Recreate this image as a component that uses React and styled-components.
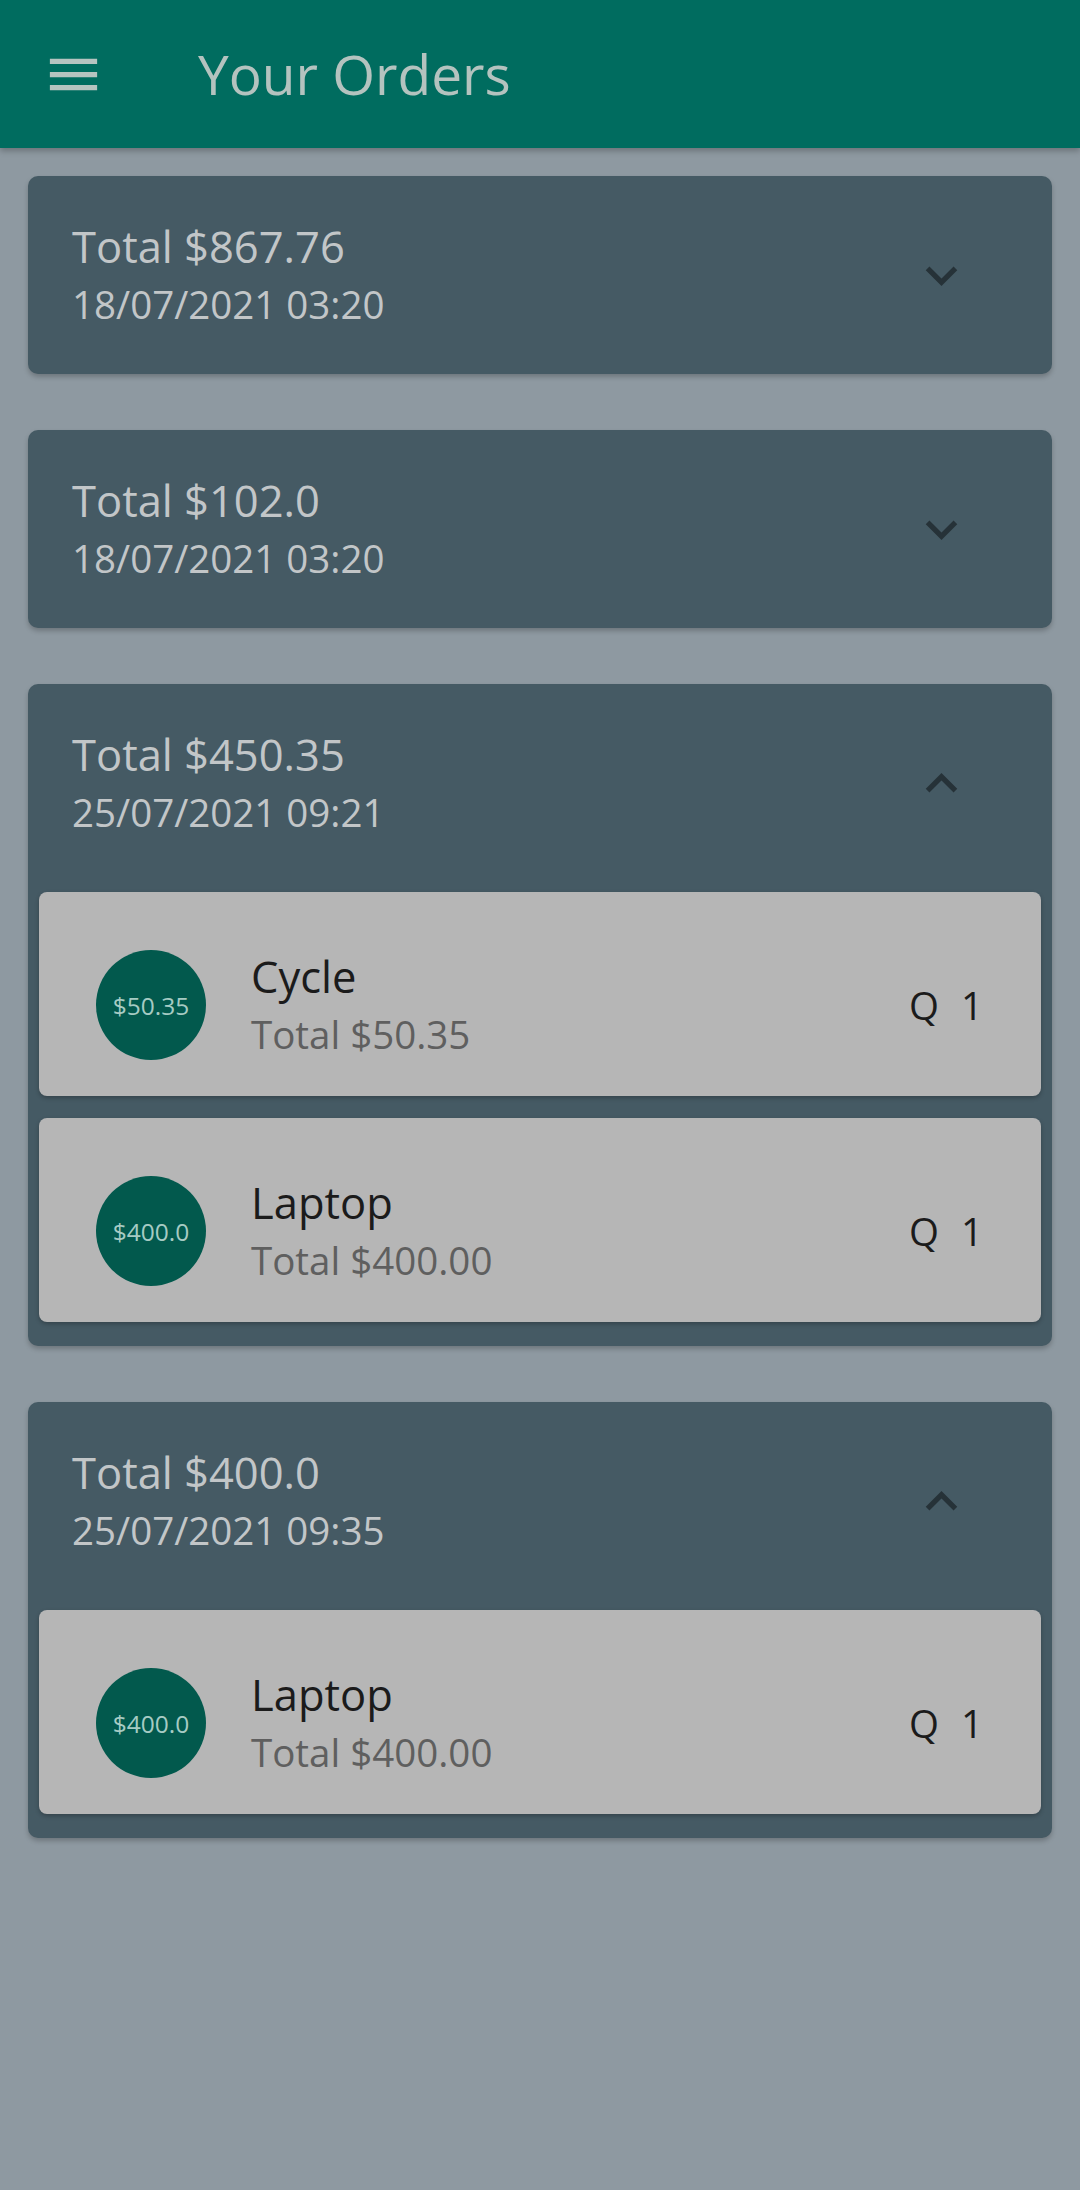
import React from 'react'
import styled, { createGlobalStyle } from 'styled-components'

const orders = [
  { total: '867.76', date: '18/07/2021 03:20', open: false, items: [] },
  { total: '102.0', date: '18/07/2021 03:20', open: false, items: [] },
  {
    total: '450.35',
    date: '25/07/2021 09:21',
    open: true,
    items: [
      { name: 'Cycle', price: '$50.35', total: '50.35', qty: 1 },
      { name: 'Laptop', price: '$400.0', total: '400.00', qty: 1 },
    ],
  },
  {
    total: '400.0',
    date: '25/07/2021 09:35',
    open: true,
    items: [{ name: 'Laptop', price: '$400.0', total: '400.00', qty: 1 }],
  },
]

export default function App() {
  return (
    <>
      <GlobalStyle />
      <AppBar>
        <MenuButton>
          <svg width="63" height="63" viewBox="0 0 24 24">
            <path d="M3 18h18v-2H3v2zm0-5h18v-2H3v2zm0-7v2h18V6H3z" fill="currentColor" />
          </svg>
        </MenuButton>
        <Title>Your Orders</Title>
      </AppBar>

      <OrderList>
        {orders.map((order, i) => (
          <OrderCard key={i}>
            <OrderHeader>
              <HeaderText>
                <OrderTotal>Total ${order.total}</OrderTotal>
                <OrderDate>{order.date}</OrderDate>
              </HeaderText>
              <Chevron viewBox="0 0 24 24">
                {order.open ? (
                  <path d="M12 8l-6 6 1.41 1.41L12 10.83l4.59 4.58L18 14z" />
                ) : (
                  <path d="M16.59 8.59L12 13.17 7.41 8.59 6 10l6 6 6-6z" />
                )}
              </Chevron>
            </OrderHeader>

            {order.open && (
              <ItemList>
                {order.items.map((item, j) => (
                  <ItemCard key={j}>
                    <Avatar>{item.price}</Avatar>
                    <ItemText>
                      <ItemName>{item.name}</ItemName>
                      <ItemTotal>Total ${item.total}</ItemTotal>
                    </ItemText>
                    <Quantity>
                      <span>Q</span>
                      <span>{item.qty}</span>
                    </Quantity>
                  </ItemCard>
                ))}
              </ItemList>
            )}
          </OrderCard>
        ))}
      </OrderList>
    </>
  )
}

const GlobalStyle = createGlobalStyle`
  html, body {
    margin: 0;
    padding: 0;
    background: #8e99a1;
    min-height: 2190px;
  }
  body {
    font-family: "Open Sans", "Noto Sans", sans-serif;
  }
`

const AppBar = styled.header`
  height: 148px;
  background: #006c5f;
  display: flex;
  align-items: center;
  box-shadow: 0 3px 6px rgba(0, 0, 0, 0.25);
  position: relative;
  z-index: 1;
`

const MenuButton = styled.div`
  width: 63px;
  height: 63px;
  margin-left: 42px;
  color: #b6c4c0;
  display: flex;
`

const Title = styled.h1`
  margin: -2px 0 0 93px;
  font-size: 55px;
  font-weight: 400;
  color: #b4c3bf;
  line-height: 1;
`

const OrderList = styled.main`
  display: flex;
  flex-direction: column;
  gap: 56px;
  padding: 28px 28px;
`

const OrderCard = styled.section`
  background: #455a64;
  border-radius: 10px;
  box-shadow: 0 3px 5px rgba(0, 0, 0, 0.22);
`

const OrderHeader = styled.div`
  height: 198px;
  box-sizing: border-box;
  display: flex;
  align-items: center;
  padding: 0 79px 0 44px;
`

const HeaderText = styled.div`
  flex: 1;
  display: flex;
  flex-direction: column;
  margin-top: -7px;
`

const OrderTotal = styled.div`
  font-size: 43.5px;
  line-height: 65px;
  color: #c2c6c8;
`

const OrderDate = styled.div`
  font-size: 38.5px;
  line-height: 50px;
  color: #c2c6c8;
`

const Chevron = styled.svg`
  width: 63px;
  height: 63px;
  fill: #263238;
  flex-shrink: 0;
`

const ItemList = styled.div`
  display: flex;
  flex-direction: column;
  gap: 22px;
  padding: 10px 11px 24px 11px;
`

const ItemCard = styled.div`
  height: 204px;
  box-sizing: border-box;
  background: #b6b6b6;
  border-radius: 8px;
  box-shadow: 0 2px 4px rgba(0, 0, 0, 0.25);
  display: flex;
  align-items: center;
  padding: 22px 58px 0 57px;
`

const Avatar = styled.div`
  width: 110px;
  height: 110px;
  border-radius: 50%;
  background: #02594d;
  color: #a6cbc3;
  font-size: 24.5px;
  display: flex;
  align-items: center;
  justify-content: center;
  flex-shrink: 0;
`

const ItemText = styled.div`
  flex: 1;
  display: flex;
  flex-direction: column;
  margin-left: 45px;
  margin-top: -7px;
`

const ItemName = styled.div`
  font-size: 43.5px;
  line-height: 65px;
  color: #1b1b1b;
`

const ItemTotal = styled.div`
  font-size: 38.5px;
  line-height: 50px;
  color: #5f5f5f;
`

const Quantity = styled.div`
  display: flex;
  gap: 22px;
  font-size: 38.5px;
  color: #1b1b1b;
`
